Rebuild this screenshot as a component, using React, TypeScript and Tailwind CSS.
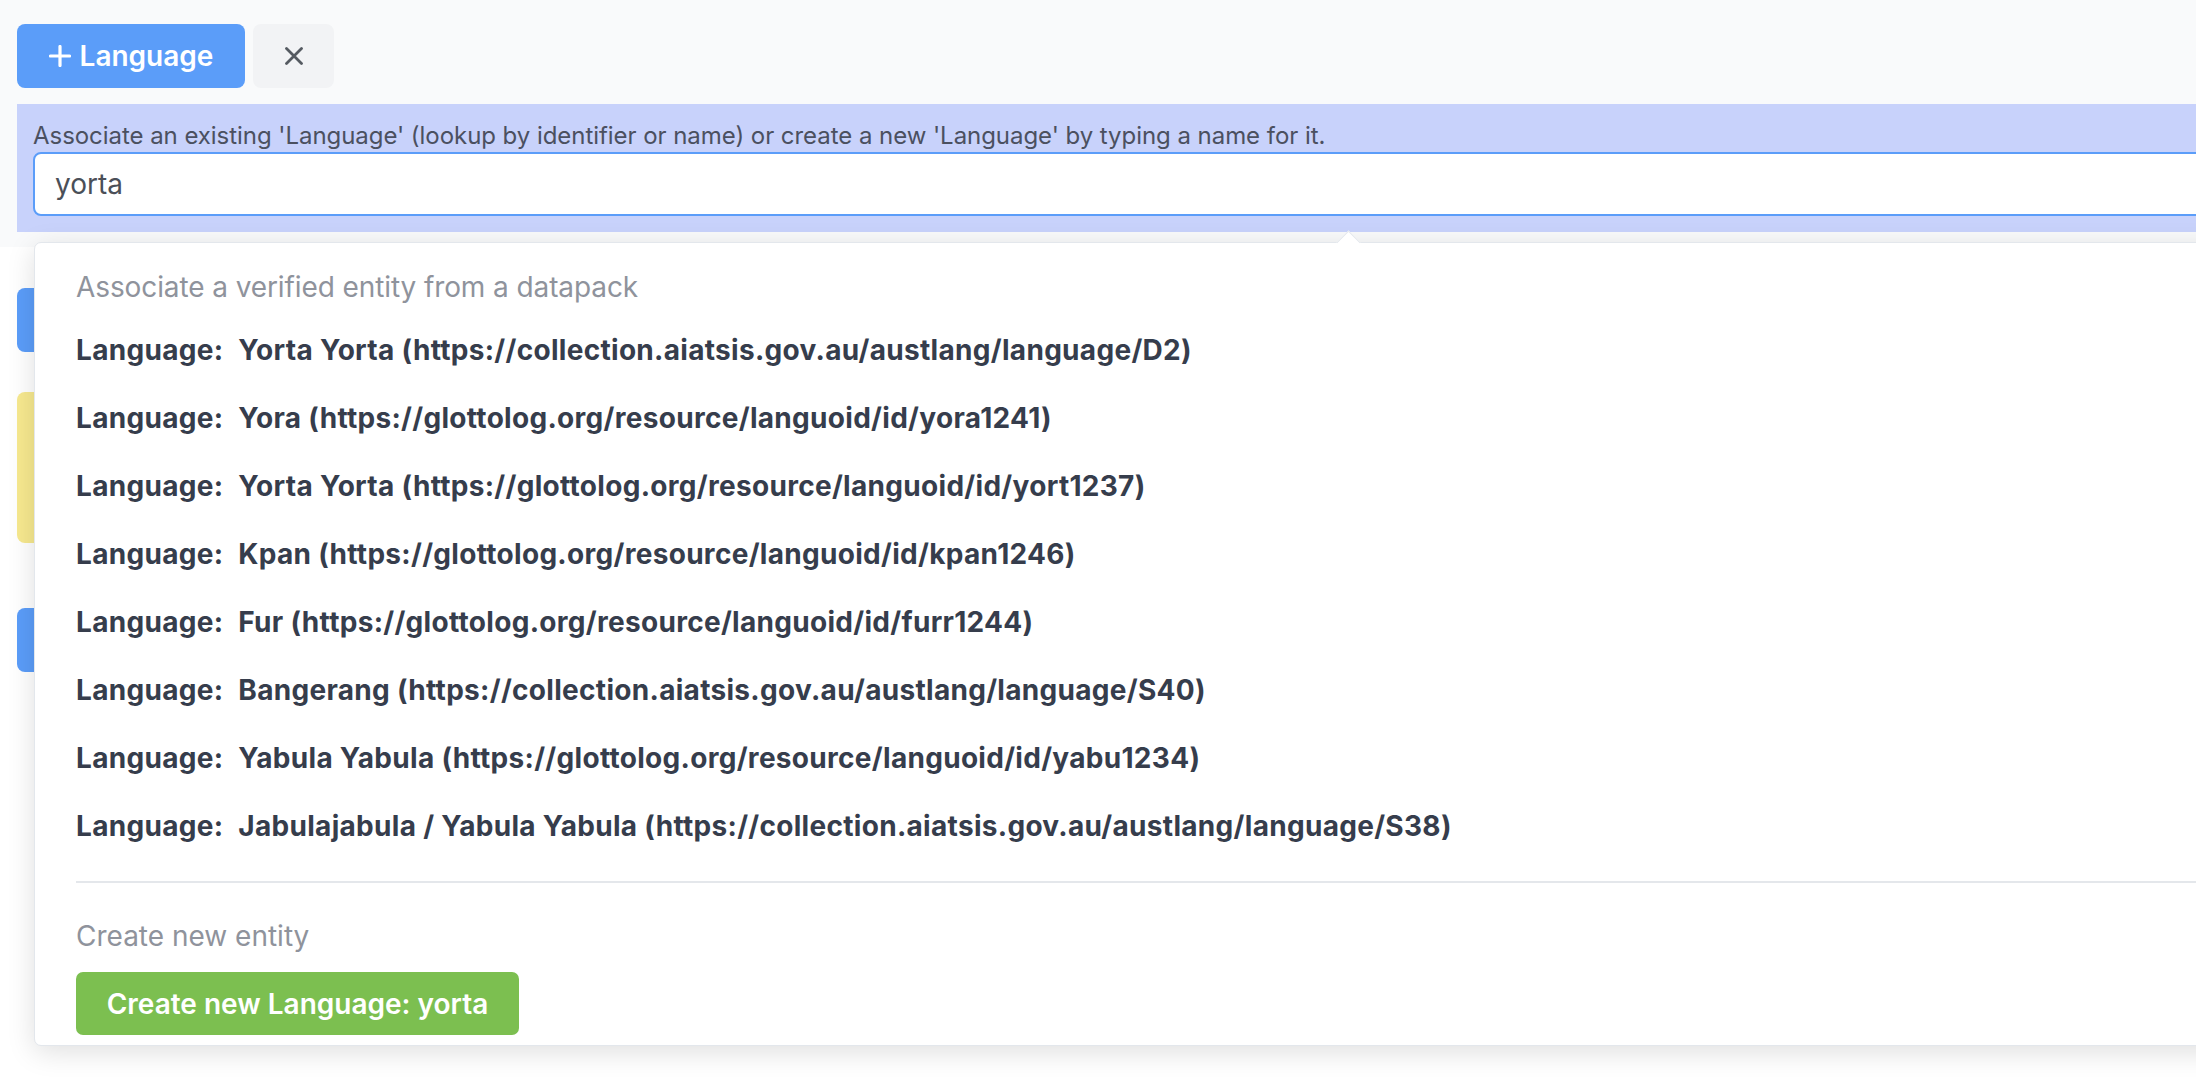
import React from "react";

const items = [
  "Yorta Yorta (https://collection.aiatsis.gov.au/austlang/language/D2)",
  "Yora (https://glottolog.org/resource/languoid/id/yora1241)",
  "Yorta Yorta (https://glottolog.org/resource/languoid/id/yort1237)",
  "Kpan (https://glottolog.org/resource/languoid/id/kpan1246)",
  "Fur (https://glottolog.org/resource/languoid/id/furr1244)",
  "Bangerang (https://collection.aiatsis.gov.au/austlang/language/S40)",
  "Yabula Yabula (https://glottolog.org/resource/languoid/id/yabu1234)",
  "Jabulajabula / Yabula Yabula (https://collection.aiatsis.gov.au/austlang/language/S38)",
];

export default function App() {
  return (
    <div
      className="relative w-full h-[1084px] overflow-hidden bg-white"
      style={{ fontFamily: "Inter, 'Noto Sans', sans-serif" }}
    >
      {/* top editing area */}
      <div className="bg-[#f9fafb] pl-[17px] pt-[24px] pb-[15px]">
        <div className="flex gap-[8px]">
          <button className="h-[64px] w-[228px] justify-center rounded-[8px] bg-[#5b9df9] text-white flex items-center gap-[9px] text-[28px] font-semibold">
            <svg width="22" height="22" viewBox="0 0 22 22" fill="none" stroke="white" strokeWidth="3.2" strokeLinecap="round">
              <path d="M11 1.5v19M1.5 11h19" />
            </svg>
            <span>Language</span>
          </button>
          <button className="h-[64px] w-[81px] rounded-[8px] bg-[#f2f3f5] flex items-center justify-center">
            <svg width="18" height="18" viewBox="0 0 18 18" fill="none" stroke="#555a61" strokeWidth="2.8" strokeLinecap="round">
              <path d="M1.5 1.5l15 15M16.5 1.5l-15 15" />
            </svg>
          </button>
        </div>
        <div className="mt-[16px] -mr-[80px] bg-[#c8d2fb] pl-[16px] pr-[16px] pt-[16px] pb-[16px]">
          <div className="h-[32px] leading-[32px] text-[24px] tracking-[-0.05px] text-[#4b5060]">
            Associate an existing 'Language' (lookup by identifier or name) or create a new 'Language' by typing a name for it.
          </div>
          <div className="h-[64px] rounded-[8px] border-2 border-[#5b9df9] bg-white flex items-center pl-[20px] text-[28px] text-[#4b4f58]">
            yorta
          </div>
        </div>
      </div>

      {/* page content behind the dropdown */}
      <div className="pl-[17px] pt-[41px] flex flex-col">
        <div className="h-[64px] w-[320px] rounded-[8px] bg-[#5b9df9]" />
        <div className="mt-[40px] h-[151px] w-[600px] rounded-[8px] bg-[#f7e98f]" />
        <div className="mt-[65px] h-[64px] w-[320px] rounded-[8px] bg-[#5b9df9]" />
      </div>

      {/* dropdown */}
      <div className="absolute left-[34px] top-[242px] -right-[60px] h-[804px] rounded-[7px] border border-[#e3e7ec] bg-white shadow-[0_6px_28px_rgba(0,0,0,0.13)]">
        <div className="absolute -top-[9px] left-[1305px] w-[17px] h-[17px] rotate-45 bg-white border-l border-t border-[#e3e7ec]" />
        <div className="relative pl-[41px] pt-[24px]">
          <div className="h-[40px] leading-[40px] text-[28px] tracking-[-0.1px] text-[#8f939c]">
            Associate a verified entity from a datapack
          </div>
          <div className="mt-[9px] flex flex-col">
            {items.map((t, i) => (
              <div
                key={i}
                className="h-[68px] leading-[68px] text-[28px] font-bold tracking-[0.3px] text-[#363d4c] whitespace-pre"
              >
                <span>Language:</span>
                <span className="ml-[15px]">{t}</span>
              </div>
            ))}
          </div>
          <div className="mt-[21px] h-[2px] bg-[#e4e7eb]" />
          <div className="mt-[33px] h-[40px] leading-[40px] text-[28px] text-[#8f939c]">
            Create new entity
          </div>
          <button className="mt-[16px] h-[63px] w-[443px] rounded-[7px] bg-[#7cbf50] text-white text-[28px] font-semibold">
            Create new Language: yorta
          </button>
        </div>
      </div>
    </div>
  );
}
